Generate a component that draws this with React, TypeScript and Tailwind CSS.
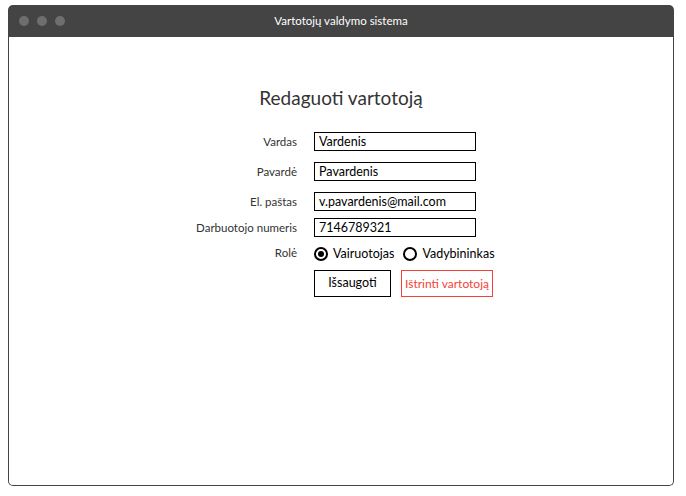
import React from "react";

function Row({ label, children, className }: { label: string; children: React.ReactNode; className?: string }) {
  return (
    <div className={"flex items-center " + (className ?? "")}>
      <div className="w-[120px] text-right text-[11.5px] text-[#333] font-['Lato',sans-serif] leading-none">{label}</div>
      <div className="ml-[17px]">{children}</div>
    </div>
  );
}

function Field({ value }: { value: string }) {
  return (
    <div className="w-[162px] h-[19px] border border-black px-[4px] pt-[1px] flex items-center text-[12.5px] text-black font-['Lato',sans-serif] leading-none whitespace-nowrap">
      {value}
    </div>
  );
}

function Radio({ checked, label }: { checked: boolean; label: string }) {
  return (
    <div className="flex items-center">
      <div className="w-[14px] h-[14px] rounded-full border-2 border-black flex items-center justify-center">
        {checked && <div className="w-[6px] h-[6px] rounded-full bg-black" />}
      </div>
      <span className="ml-[5px] text-[12.5px] text-black font-['Lato',sans-serif] leading-none">{label}</span>
    </div>
  );
}

export default function App() {
  return (
    <div className="w-[686px] h-[496px] bg-white relative">
      <div className="absolute left-[8px] top-[5px] w-[666px] h-[481px] flex flex-col">
        <div className="h-[32px] bg-[#444444] rounded-t-[5px] flex items-center relative">
          <div className="flex gap-[8px] ml-[11px]">
            <div className="w-[10px] h-[10px] rounded-full bg-[#6e6e6e]" />
            <div className="w-[10px] h-[10px] rounded-full bg-[#6e6e6e]" />
            <div className="w-[10px] h-[10px] rounded-full bg-[#6e6e6e]" />
          </div>
          <div className="absolute inset-0 flex items-center justify-center text-white text-[11.5px] font-['Lato',sans-serif]">
            Vartotojų valdymo sistema
          </div>
        </div>
        <div className="flex-1 border border-t-0 border-[#444444] rounded-b-[5px] bg-white">
          <div className="text-center text-[19px] text-[#333] mt-[48px] leading-[26px] font-['Lato',sans-serif]">
            Redaguoti vartotoją
          </div>
          <div className="ml-[168px] mt-[21px] flex flex-col">
            <Row label="Vardas"><Field value="Vardenis" /></Row>
            <Row label="Pavardė" className="mt-[11px]"><Field value="Pavardenis" /></Row>
            <Row label="El. paštas" className="mt-[11px]"><Field value="v.pavardenis@mail.com" /></Row>
            <Row label="Darbuotojo numeris" className="mt-[7px]"><Field value="7146789321" /></Row>
            <div className="flex items-start mt-[10px]">
              <div className="w-[120px] text-right text-[11.5px] text-[#333] font-['Lato',sans-serif] leading-none">Rolė</div>
              <div className="ml-[17px] flex gap-[9px]">
                <Radio checked label="Vairuotojas" />
                <Radio checked={false} label="Vadybininkas" />
              </div>
            </div>
            <div className="flex mt-[9px] ml-[137px] gap-[10px]">
              <button className="w-[77px] h-[27px] border border-black text-[12.5px] text-black font-['Lato',sans-serif] flex items-center justify-center whitespace-nowrap">
                Išsaugoti
              </button>
              <button className="w-[92px] h-[27px] border border-[#f44336] text-[12px] text-[#f44336] font-['Lato',sans-serif] flex items-center justify-center whitespace-nowrap">
                Ištrinti vartotoją
              </button>
            </div>
          </div>
        </div>
      </div>
    </div>
  );
}
